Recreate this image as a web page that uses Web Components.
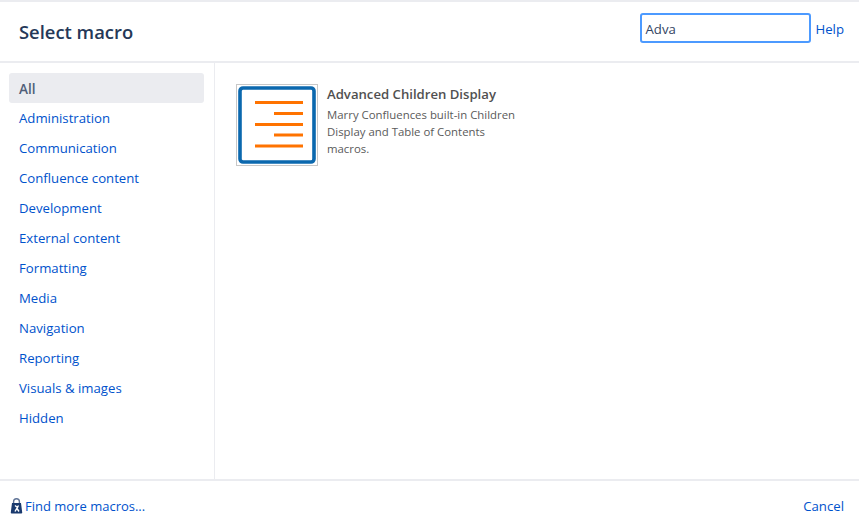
<!DOCTYPE html>
<html>
<head>
<meta charset="utf-8">
<title>Select macro</title>
<style>
  html, body { margin: 0; height: 100%; background: #fff; }
  body { font-family: "Open Sans", "Noto Sans", sans-serif; font-size: 13.2px; color: #172b4d; overflow: hidden; }
</style>
</head>
<body>
<macro-dialog>
  <span slot="title">Select macro</span>
  <macro-search slot="search" value="Adva"></macro-search>
  <a slot="help">Help</a>
  <cat-item selected>All</cat-item>
  <cat-item>Administration</cat-item>
  <cat-item>Communication</cat-item>
  <cat-item>Confluence content</cat-item>
  <cat-item>Development</cat-item>
  <cat-item>External content</cat-item>
  <cat-item>Formatting</cat-item>
  <cat-item>Media</cat-item>
  <cat-item>Navigation</cat-item>
  <cat-item>Reporting</cat-item>
  <cat-item>Visuals &amp; images</cat-item>
  <cat-item>Hidden</cat-item>
  <macro-card slot="results" name="Advanced Children Display">Marry Confluences built-in Children Display and Table of Contents macros.</macro-card>
  <span slot="more">Find more macros...</span>
  <span slot="cancel">Cancel</span>
</macro-dialog>

<script>
// main dialog frame: header, sidebar + results, footer
class MacroDialog extends HTMLElement {
  constructor() {
    super();
    const shadow = this.attachShadow({ mode: 'open' });
    shadow.innerHTML = `
      <style>
        :host { display: flex; flex-direction: column; height: 530px; border-top: 2px solid #ebecf0; box-sizing: border-box; }
        header { display: flex; align-items: center; height: 59px; border-bottom: 2px solid #ebecf0; padding: 0 15px 0 19px; flex: none; }
        h2 { margin: 0; flex: 1; font-size: 18.400px; font-weight: 600; color: #253858; }
        ::slotted([slot=search]) { margin-bottom: 8px; }
        ::slotted([slot=help]) { color: #0052cc; margin: 0 0 5px 4px; }
        ::slotted([slot=more]) { font-size: 13px; }
        .body { flex: 1; display: flex; min-height: 0; }
        nav { width: 215px; flex: none; box-sizing: border-box; border-right: 1px solid #ebecf0; padding: 10px 10px 0 9px; }
        main { flex: 1; padding: 21px 0 0 21px; }
        footer { display: flex; align-items: center; justify-content: space-between; height: 51px; flex: none; border-top: 2px solid #ebecf0; padding: 0 15px 0 10px; box-sizing: border-box; color: #0052cc; }
        .more { display: flex; align-items: center; gap: 2px; }
      </style>
      <header>
        <h2><slot name="title"></slot></h2>
        <slot name="search"></slot>
        <slot name="help"></slot>
      </header>
      <div class="body">
        <nav><slot></slot></nav>
        <main><slot name="results"></slot></main>
      </div>
      <footer>
        <div class="more">
          <svg width="13" height="16" viewBox="0 0 13 16">
            <path d="M3.600 5V3.600a2.900 2.900 0 0 1 5.800 0V5" fill="none" stroke="#5f7396" stroke-width="1.400"/>
            <path d="M2 5h9l1.200 9.400a1 1 0 0 1-1 1.200H1.800a1 1 0 0 1-1-1.200z" fill="#1a3a6e"/>
            <path d="M5 7.500l3 2.500M8.500 7.500L5 13.500M7 10.500l2 3" stroke="#fff" stroke-width="1.400" fill="none"/>
          </svg>
          <slot name="more"></slot>
        </div>
        <slot name="cancel"></slot>
      </footer>`;
  }
}
customElements.define('macro-dialog', MacroDialog);

class MacroSearch extends HTMLElement {
  constructor() {
    super();
    const shadow = this.attachShadow({ mode: 'open' });
    shadow.innerHTML = `
      <style>
        :host { display: block; }
        .box { width: 171px; height: 30px; box-sizing: border-box; border: 2px solid #4c9aff; border-radius: 3px; padding: 2px 4px 0 3px; display: flex; align-items: center; color: #344563; }
      </style>
      <div class="box"></div>`;
    shadow.querySelector('.box').textContent = this.getAttribute('value');
  }
}
customElements.define('macro-search', MacroSearch);

class CatItem extends HTMLElement {
  constructor() {
    super();
    const shadow = this.attachShadow({ mode: 'open' });
    shadow.innerHTML = `
      <style>
        :host { display: flex; align-items: center; height: 30px; box-sizing: border-box; padding-left: 10px; border-radius: 3px; color: #0052cc; }
        :host([selected]) { background: #ebecf0; color: #505f79; font-weight: 600; font-size: 13.600px; }
      </style>
      <slot></slot>`;
  }
}
customElements.define('cat-item', CatItem);

class MacroCard extends HTMLElement {
  constructor() {
    super();
    const shadow = this.attachShadow({ mode: 'open' });
    shadow.innerHTML = `
      <style>
        :host { display: flex; gap: 9px; width: 290px; }
        .thumb { width: 82px; height: 82px; box-sizing: border-box; border: 1px solid #c8c8c8; padding: 1px; flex: none; }
        .thumb svg { display: block; }
        .name { font-size: 13.150px; font-weight: 600; color: #505050; line-height: 20px; }
        .desc { font-size: 11.400px; line-height: 17px; color: #5a5a5a; margin-top: 2px; width: 195px; }
      </style>
      <div class="thumb">
        <svg width="78" height="78" viewBox="0 0 78 78">
          <rect x="2" y="2" width="74" height="74" rx="3" fill="#fff" stroke="#0b68ae" stroke-width="3.600"/>
          <g stroke="#ff7300" stroke-width="3">
            <path d="M17 16.500H65"/><path d="M36 27.500H65"/><path d="M17 38.500H65"/><path d="M36 49H65"/><path d="M17 60H65"/>
          </g>
        </svg>
      </div>
      <div>
        <div class="name"></div>
        <div class="desc"><slot></slot></div>
      </div>`;
    shadow.querySelector('.name').textContent = this.getAttribute('name');
  }
}
customElements.define('macro-card', MacroCard);
</script>
</body>
</html>
